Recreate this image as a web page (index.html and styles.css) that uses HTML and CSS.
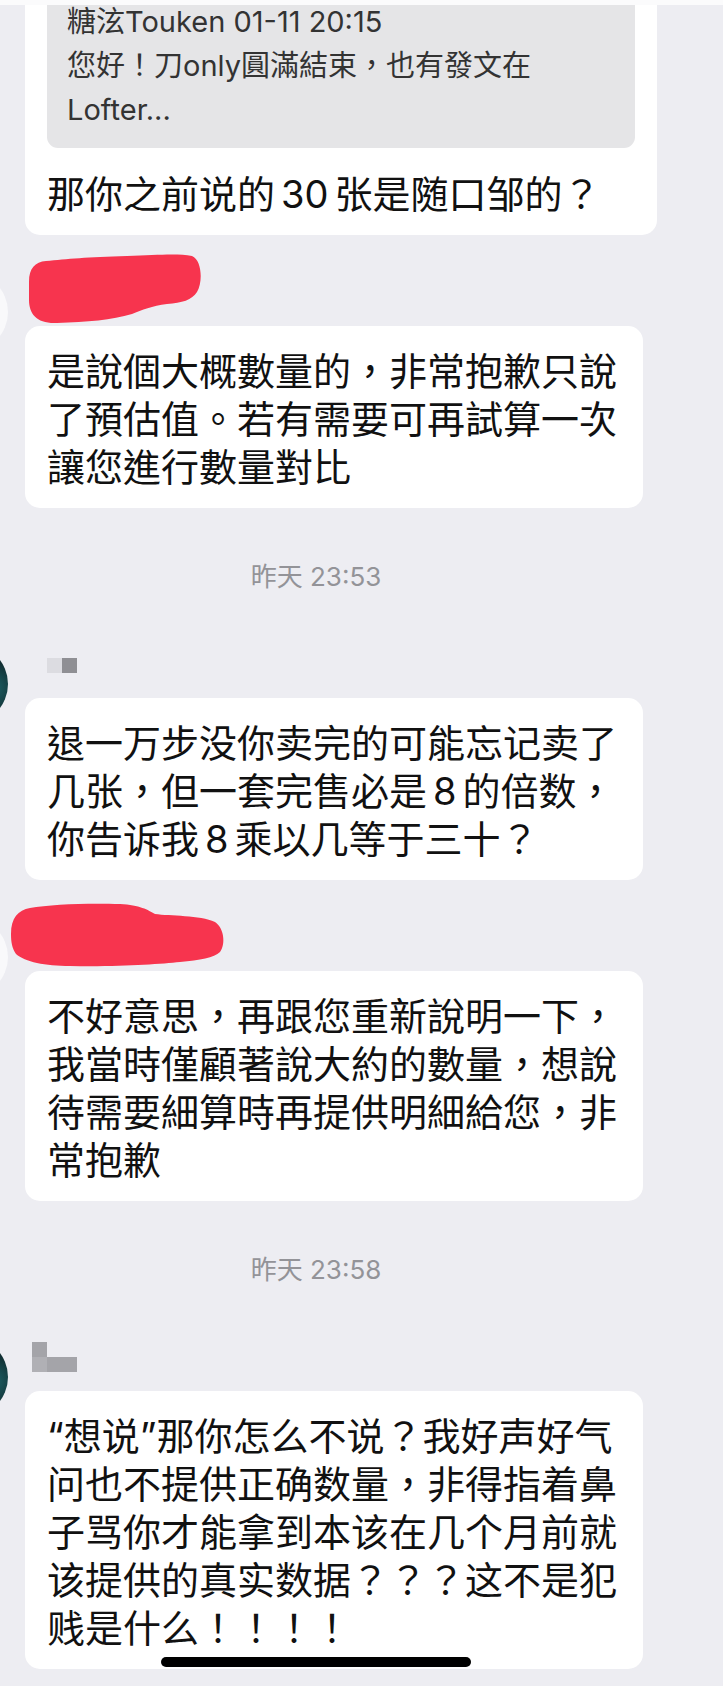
FILE: index.html
```html
<!DOCTYPE html>
<html lang="zh-Hant">
<head>
    <meta charset="UTF-8">
    <meta name="viewport" content="width=device-width, initial-scale=1, user-scalable=no">
    <title>chat</title>
    <link rel="stylesheet" href="styles.css">
</head>
<body>
    <div class="topbar"></div>

    <div class="chat">
        <div class="msg msg-first">
            <div class="msg-body">
                <div class="bubble bubble-quote">
                    <div class="quote">糖泫Touken 01-11 20:15<br>您好！刀only圓滿結束，也有發文在<br>Lofter...</div>
                    <p class="text">那你之前说的<span class="num">30</span>张是随口邹的？</p>
                </div>
            </div>
        </div>

        <div class="msg">
            <div class="avatar avatar-light"></div>
            <div class="msg-body">
                <div class="name">
                    <svg class="redact redact-1" viewBox="0 0 175 72">
                        <path d="M2 30 C2 16 8 10 19 9 C40 7 60 5 100 4 C130 3 150 1 165 4 C175 8 176 30 170 40 C165 48 155 51 140 52 C125 54 115 58 105 62 C85 68 60 70 30 71 C10 72 2 62 2 48 Z"/>
                    </svg>
                </div>
                <div class="bubble">是說個大概數量的，非常抱歉只說了預估值。若有需要可再試算一次讓您進行數量對比</div>
            </div>
        </div>

        <div class="time">昨天 23:53</div>

        <div class="msg">
            <div class="avatar avatar-dark"></div>
            <div class="msg-body">
                <div class="name">
                    <div class="mosaic mosaic-a">
                        <span></span><span class="c1"></span><span class="c4"></span>
                    </div>
                </div>
                <div class="bubble">退一万步没你卖完的可能忘记卖了几张，但一套完售必是<span class="num">8</span>的倍数，你告诉我<span class="num">8</span>乘以几等于三十？</div>
            </div>
        </div>

        <div class="msg">
            <div class="avatar avatar-light"></div>
            <div class="msg-body">
                <div class="name">
                    <svg class="redact redact-2" viewBox="0 0 216 66">
                        <path d="M1 32 C1 16 8 8 20 6 C40 2 80 1 110 2 C130 3 138 8 145 12 C160 14 190 13 205 20 C214 26 216 42 210 50 C204 56 190 58 170 60 C150 62 110 65 60 64 C35 64 15 60 6 52 C2 46 1 40 1 32 Z"/>
                    </svg>
                </div>
                <div class="bubble">不好意思，再跟您重新說明一下，我當時僅顧著說大約的數量，想說待需要細算時再提供明細給您，非常抱歉</div>
            </div>
        </div>

        <div class="time">昨天 23:58</div>

        <div class="msg">
            <div class="avatar avatar-dark"></div>
            <div class="msg-body">
                <div class="name">
                    <div class="mosaic mosaic-b">
                        <span class="c3"></span><span></span><span></span>
                        <span class="c2"></span><span class="c3"></span><span class="c3"></span>
                    </div>
                </div>
                <div class="bubble">“想说”那你怎么不说？我好声好气问也不提供正确数量，非得指着鼻子骂你才能拿到本该在几个月前就该提供的真实数据？？？这不是犯贱是什么！！！！</div>
            </div>
        </div>
    </div>

    <div class="home-bar"></div>
</body>
</html>
```

FILE: styles.css
```css
html,
body {
    margin: 0;
    padding: 0;
}

body {
    width: 723px;
    height: 1686px;
    overflow: hidden;
    background-color: #ededf2;
    font-family: Inter, "Noto Sans CJK TC", sans-serif;
    color: #111;
}

.topbar {
    position: fixed;
    top: 0;
    left: 0;
    right: 0;
    height: 5px;
    background-color: #fbfbfc;
    z-index: 2;
}

.chat {
    display: flex;
    flex-direction: column;
    padding-left: 25px;
}

.msg {
    display: flex;
    align-items: flex-start;
}

.msg + .msg {
    margin-top: 47px;
}

.msg-first {
    margin-top: -34px;
}

.avatar {
    flex: none;
    width: 80px;
    height: 80px;
    border-radius: 50%;
    margin: -10px 17px 0 -97px;
}

.avatar-light {
    background-color: #f9f9fb;
}

.avatar-dark {
    background: radial-gradient(circle at 80% 55%, #1f6469 0%, #0c1d21 45%, #050808 100%);
}

.msg-body {
    display: flex;
    flex-direction: column;
    align-items: flex-start;
}

.name {
    position: relative;
    height: 44px;
}

.redact {
    position: absolute;
    fill: #f7344e;
}

.redact-1 {
    left: 2px;
    top: -30px;
    width: 175px;
    height: 72px;
}

.redact-2 {
    left: -15px;
    top: -25px;
    width: 216px;
    height: 66px;
}

.mosaic {
    display: grid;
    grid-template-columns: repeat(3, 15px);
    grid-auto-rows: 15px;
    margin-left: 7px;
}

.mosaic-a {
    margin-top: 4px;
}

.mosaic-b {
    margin-top: -5px;
}

.mosaic .c1 { background-color: #dcdce1; }
.mosaic .c2 { background-color: #b0b0b5; }
.mosaic .c3 { background-color: #a4a4a9; }
.mosaic .c4 { background-color: #8f8f94; }

.bubble {
    box-sizing: border-box;
    max-width: 618px;
    padding: 21px 22px 17px;
    background-color: #fff;
    border-radius: 15px;
    font-size: 38px;
    line-height: 48px;
}

.bubble-quote {
    width: 632px;
    max-width: none;
    padding-top: 22px;
}

.quote {
    margin-bottom: 22px;
    padding: 12px 20px 16px;
    background-color: #e5e5e7;
    border-radius: 11px;
    font-size: 29px;
    line-height: 44px;
    color: #333;
}

.text {
    margin: 0;
}

.num {
    margin: 0 6px;
}

.time {
    margin: 54px 0 62px;
    padding-right: 116px;
    text-align: center;
    font-size: 26px;
    line-height: 30px;
    color: #939398;
}

.home-bar {
    position: fixed;
    left: 161px;
    bottom: 19px;
    width: 310px;
    height: 10px;
    border-radius: 5px;
    background-color: #000;
}
```
